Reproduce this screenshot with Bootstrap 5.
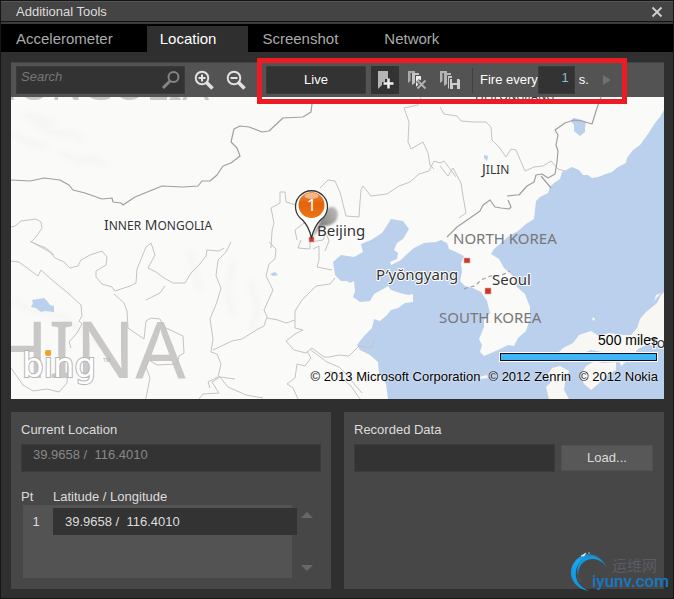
<!DOCTYPE html>
<html lang="en">
<head>
<meta charset="utf-8">
<meta name="viewport" content="width=device-width, initial-scale=1">
<title>Additional Tools</title>
<link href="https://cdn.jsdelivr.net/npm/bootstrap@5.3.0/dist/css/bootstrap.min.css" rel="stylesheet">
<style>
  body { background: #2f2f2f; color: #ddd; font: 13px/16px "Liberation Sans", Arial, sans-serif; }
  .tool-window { min-height: 100vh; border: 1px solid #151515; }
  .title-strip { height: 21px; background: #444; border-top: 1px solid #555; border-bottom: 1px solid #111; padding: 0 6px 0 15px; }
  .title-strip h1 { font-size: 13px; line-height: 18px; }
  .title-strip button, .bar-btn, .scroll-btn { background: none; border: 0; padding: 0; line-height: 0; }
  .tab-strip { background: #000; border-top: 2px solid #3c3c3c; height: 30px; padding-top: 2px; }
  .tab-strip .nav-link { color: #aaa; font-size: 15px; line-height: 18px; padding: 4px 32px 4px 14px; border: 0; border-radius: 0; }
  .tab-strip .nav-link.active { background: #2f2f2f; color: #fff; padding-left: 13px; }
  .tab-strip .nav-item:first-child .nav-link { padding-left: 15px; padding-right: 34px; }
  .tab-strip .nav-item:last-child .nav-link { padding-left: 32px; }
  .tab-strip .nav-item:nth-child(3) .nav-link { padding-right: 14px; }
  .main-area { padding: 10px 9px 9px 10px; }
  .tool-strip { height: 35px; background: #535353; border-top: 1px solid #444; padding: 0 5px; }
  .dark-field { background: #333; border: 1px solid #3b3b3b; border-radius: 0; color: #ddd; font-size: 13px; line-height: 16px; height: 28px; box-shadow: none; }
  .dark-field:focus { background: #333; color: #fff; border-color: #777; box-shadow: none; }
  .search-box { width: 169px; }
  .search-box input { padding: 0 34px 7px 4px; font-style: italic; }
  .search-box input::placeholder { color: #777; opacity: 1; }
  .search-box svg { right: 4px; top: 4px; }
  .zoom-group { gap: 12px; margin-left: 9px; }
  .fire-group { margin-left: 20px; gap: 5px; }
  .fire-group::after { content: ""; position: absolute; inset: -8px -11px -10px -9px; border: 5px solid #ed1c24; pointer-events: none; }
  .live-btn { width: 100px; padding: 0; color: #fff; }
  .bar-btn { width: 28px; height: 28px; }
  .bar-btn.on { background: #333; }
  .bar-btn.zoom-btn { width: 20px; }
  .bar-btn.start-btn { width: 18px; margin-left: -2px; }
  .bar-divider { width: 1px; height: 25px; background: #404040; margin: 0 2px 0 2px; }
  .seconds-box { width: 37px; padding: 0 5px 6px; color: #8dbdd0; text-align: right; }
  .map-area { min-height: 302px; background: #fafaf9; }
  .map-area > svg { position: absolute; inset: 0; width: 100%; height: 100%; }
  .map-foot { position: absolute; right: 6px; bottom: 14px; color: #000; text-shadow: 0 0 2px #fff; }
  .map-foot .scale-text { font-size: 14px; line-height: 16px; }
  .scale-line { width: 157px; height: 8px; background: #41b5f7; border: 1px solid #112; outline: 1px solid #fff; margin: 5px 1px 8px 0; }
  .credits { gap: 8px; }
  .panels { gap: 13px; margin-top: 13px; }
  .tool-panel { background: #474747; padding: 10px 10px 10px; min-height: 177px; flex: 1 1 0; }
  .tool-panel .head { line-height: 16px; margin-bottom: 6px; display: block; }
  .current-field { color: #888; padding: 0 11px 7px; }
  .points { margin-top: 17px; }
  .points table { margin-left: 2px; }
  .points th { font-weight: 400; line-height: 16px; padding: 0; }
  .points th:first-child { width: 30px; text-indent: -2px; }
  .points tbody td { background: #535353; padding: 3px 0 3px; }
  .points tbody tr:last-child td { height: 40px; }
  .points .point-cell { padding-right: 0; }
  .point-field { width: calc(100% + 5px); position: relative; padding: 0 11px; height: 27px; border-color: #333; }
  .scroll-col { width: 29px; padding: 22px 0 6px; }
  .load-field { height: 28px; }
  .load-btn { width: 92px; height: 26px; padding: 0; background: #585858; border: 1px solid #505050; border-radius: 0; color: #ddd; font-size: 13px; line-height: 16px; margin: 1px 1px 0 6px; }
  .site-mark { position: absolute; right: 3px; bottom: 3px; pointer-events: none; }
  .site-mark svg { display: block; }
  .map-area text { font-family: "Noto Sans", "Open Sans", sans-serif; }
  .map-area .wordmark { font-family: "DejaVu Sans", sans-serif; }
</style>
</head>
<body>
<div class="tool-window position-relative d-flex flex-column">
  <header class="title-strip d-flex justify-content-between align-items-center">
    <h1 class="m-0 fw-normal">Additional Tools</h1>
    <button type="button" aria-label="Close"><svg width="20" height="18" viewBox="0 0 20 18"><path d="M5.500 4.500l9 9M14.500 4.500l-9 9" stroke="#d0d0d0" stroke-width="1.800"/></svg></button>
  </header>
  <nav class="tab-strip" aria-label="Tools">
    <ul class="nav flex-nowrap">
      <li class="nav-item"><a class="nav-link" href="#accelerometer">Accelerometer</a></li>
      <li class="nav-item"><a class="nav-link active" aria-current="page" href="#location">Location</a></li>
      <li class="nav-item"><a class="nav-link" href="#screenshot">Screenshot</a></li>
      <li class="nav-item"><a class="nav-link" href="#network">Network</a></li>
    </ul>
  </nav>
  <main class="main-area d-flex flex-column flex-grow-1">
    <div class="tool-strip d-flex align-items-center position-relative z-1">
      <div class="search-box position-relative">
        <input class="form-control dark-field" type="text" placeholder="Search" aria-label="Search">
        <svg class="position-absolute" width="20" height="20" viewBox="0 0 20 20" fill="none" stroke="#858585"><circle cx="12.500" cy="7" r="5" stroke-width="2"/><path d="M9 11L2 18" stroke-width="3"/></svg>
      </div>
      <div class="zoom-group d-flex">
        <button class="bar-btn zoom-btn" type="button" aria-label="Zoom in"><svg width="20" height="22" viewBox="0 0 20 22" fill="none" stroke="#e2e2e2"><circle cx="8" cy="9" r="6.300" stroke-width="2"/><path d="M12.500 13.500l6 6" stroke-width="3.500"/><path d="M4.500 9h7M8 5.500v7" stroke-width="2"/></svg></button>
        <button class="bar-btn zoom-btn" type="button" aria-label="Zoom out"><svg width="20" height="22" viewBox="0 0 20 22" fill="none" stroke="#e2e2e2"><circle cx="8" cy="9" r="6.300" stroke-width="2"/><path d="M12.500 13.500l6 6" stroke-width="3.500"/><path d="M4.500 9h7" stroke-width="2"/></svg></button>
      </div>
      <div class="fire-group d-flex align-items-center position-relative">
        <button class="btn dark-field live-btn" type="button">Live</button>
        <button class="bar-btn on" type="button" aria-label="Add point"><svg width="28" height="28" viewBox="0 0 28 28"><path d="M7 5h10v8h-3v3h-3v3l-4 4z" fill="#b5b5b5"/><path d="M17.500 12.500v10M12.500 17.500h10" stroke="#eee" stroke-width="2.500"/></svg></button>
        <button class="bar-btn" type="button" aria-label="Clear points"><svg width="28" height="28" viewBox="0 0 28 28"><path d="M4 5h7v2H6.500v8L4 17z" fill="#aaa"/><path d="M8 7h7v2h-4v8l-3 2z" fill="#c4c4c4"/><path d="M12 10h5v4l-2 1v3l-3 3z" fill="#ececec"/><path d="M13.500 14.500l8 8M21.500 14.500l-8 8" stroke="#535353" stroke-width="4"/><path d="M13.500 14.500l8 8M21.500 14.500l-8 8" stroke="#b4b4b4" stroke-width="1.800"/></svg></button>
        <button class="bar-btn" type="button" aria-label="Save points"><svg width="28" height="28" viewBox="0 0 28 28"><path d="M3 5h7v2H5.500v8L3 17zM7 7h7v2h-4v9l-3 2z" fill="#b4b4b4"/><path d="M11 10h4v9l-4 4z" fill="#c8c8c8"/><path d="M12 12h11v11H12z" fill="#535353"/><path d="M13 13h2v4h5v-4h2l1 1v9h-3v-4h-4v4h-3z" fill="#cfcfcf"/></svg></button>
        <span class="bar-divider"></span>
        <div class="d-flex align-items-center text-white">
          <label for="interval" class="text-nowrap">Fire every</label>
          <input id="interval" class="form-control dark-field seconds-box" type="text" value="1">
          <span class="ps-1">s.</span>
        </div>
        <button class="bar-btn start-btn ms-1" type="button" aria-label="Start"><svg width="18" height="18" viewBox="0 0 18 18"><path d="M5 4l8 5-8 5z" fill="#707070"/></svg></button>
      </div>
    </div>

    <section class="map-area position-relative overflow-hidden flex-grow-1" aria-label="Map">
      <svg viewBox="11 97 653 302" preserveAspectRatio="xMidYMid slice">
        <defs>
          <linearGradient id="pinShade" x1="0" y1="1" x2="1" y2="0"><stop offset="0" stop-color="#333" stop-opacity=".85"/><stop offset="1" stop-color="#999" stop-opacity=".6"/></linearGradient>
          <linearGradient id="pinFill" x1="0" y1="0" x2="0" y2="1"><stop offset="0" stop-color="#ef8a3a"/><stop offset=".45" stop-color="#e2640c"/><stop offset="1" stop-color="#ee7415"/></linearGradient>
          <filter id="relief"><feGaussianBlur stdDeviation="3"/></filter>
          <filter id="soften"><feGaussianBlur stdDeviation=".8"/></filter>
        </defs>
        <path fill="#fafaf9" d="M11 97h653v302H11z"/>
        <g fill="none" stroke="#f2f2f1" stroke-width="4" filter="url(#relief)">
          <path d="M12 133l15 9 20 5M35 125l22 9 18 0 8 8M60 153l20 8 15-3 12 8M11 300l20 10 30 6 40 30M235 260l-8 30 6 25M250 280l8 30-6 20M190 250l10 40M25 115l30 8"/>
        </g>
        <!-- sea, from the Russian coast south round Korea, the Bohai gulf and Shandong -->
        <path fill="#bbd0ec" d="M664 110L660 117 655 123 648 134 640 145 633 150 627 158 626 163 618 167 612 172 606 174 598 177 592 178 588 175 583 175 579 170 572 167 566 170 562 172 560 179 554 183 550 187 548 193 540 197 536 201 535 210 534 219 526 224 518 231 509 236 501 243 494 249 491 254 499 259 504 268 512 275 517 287 525 294 530 307 530 319 526 331 518 338 514 346 508 345 498 350 484 356 480 352 482 345 479 339 484 327 484 320 490 313 487 301 481 292 473 288 465 286 460 281 462 272 461 263 464 256 456 252 449 249 447 243 441 240 436 242 424 243 414 248 407 254 401 260 391 265 390 262 397 259 398 253 394 250 397 243 403 239 409 229 403 221 391 219 386 227 382 233 371 240 361 244 363 252 354 257 341 255 333 262 335 275 341 281 347 281 350 283 354 281 355 291 353 297 360 302 370 301 374 294 383 289 388 286 391 290 400 293 408 295 413 294 413 302 405 303 398 308 391 310 387 315 380 321 374 319 372 328 364 336 357 345 360 350 370 355 378 362 379 373 386 384 388 399 664 399z"/>
        <path fill="#bbd0ec" d="M32 300l12-2 4 4 2 3 4 1 0 6-9-1-4 1-5-4-5-1 2-4zM573 118l6 1 7 3-1 5 0 5-5 4-6-5 0-6-3-4zM484 155l4 1-1 5-3-3zM270 274l5-2 3 3-5 1z"/>
        <path fill="#f8f7f3" d="M664 292l-3 3-4 8-11 9-6 7-3 9-6 7-8 0-14-2-10 3-8-5-12 4-6 8-10 5-9 9 12-4 13 2 12-5 16 3 10 2 4 11 10-8 7-9 8-4 18 1zM661 293l-7 8 2-6zM548 374l4-6 8-2 9 5-4 12-1 7 5 9h-20l-3-12 6-6-5-3zM580 376l6-10 9-5 7 2 14-1 0 8-10 6-9 9-6 5-7-6zM479 377l8-2 1 3-8 1zM593 317l2 2-1 2-2-2z"/>
        <g fill="none" stroke="#c4c4c4" stroke-width="1" stroke-linejoin="round">
          <path d="M11 227l4-1 6-5 15-2 5 3 1 6-6 9-5 5 15 6 8 7M30 241l20 11 5 6 9 4 6 6 8-2 3-6 9-5 12-4 5 6-1 8-10 6 0 6 6 7 10 3 3 4 15-5 6-3 1-14 9-22 5-4 4 12-7 13 8 4 8 6 9 5 12 0 6-10 8-8 7-9 1-6 12 1 5-3"/>
          <path d="M11 261l8 1 19 14 3-6 11 10 16 13 13 12 1 11-3 5 3 3-5 9-8 9 2 6M114 294l10 9 3 8 1 17 16 11 2-18 5-3 9 1 4 8 19 9 1 17-5 3-2 8-20 1-8-5-3 7 4 11-4 20-8 11M146 300l14-7 5-7"/>
          <path d="M231 242l-5 10-8 8-2 16 5 12-4 14-7 17 3 20-2 13 6 2 4 10-3 13-10 5 2 6M213 350l19-9 10-2 16-10 6-3 3-9-3-7 9-20-7-14 3-12 6-5 1-10-7-7"/>
          <path d="M267 318l11 2 8 3 9-3 0-9 7-11 14-14 14-2 5-6M295 320l0 8 8 2-8 4-9 7 8 9 12 3 6-5 12 9 5 0 10-2 10 1 10-10 12 2 3-7M307 351l4 7-6 8-8-2-2 14-8 6 6 4 5 11M311 350l8 6 8 6 12 5 8 8 8 10 7 8M219 376l9 11 18 8 17 3M11 368l12 17 10 6 14-2 12 3 8-9 1-20M199 399l4-5 16-1-7-11 8-5 15 2M360 399l-9-13-12-10-9-5"/>
          <path d="M271 248l1-17 2-8-3-15 9-5 0-11 5 0 1 10 10 3M320 188l8-8 7 1 5 11 6 24 13 1 1-15 1-12 2-4 8 10 16-2 12-8 11-4 9-8 10-3 5-10 6 2 4-2 12 16M421 97l-3 8-14 3 5 14-1 20 3 7 12-7 5 11 2 12 4 4"/>
          <path d="M440 107l4 7 13 2 4 5 13 1 12 0 5 5 1 13 7 7 7 10 5-8 5 1 9 21 9-4 9-1 8-5 7 8 7 2M440 166l8 10 5-8 8 15 2 13 3 17-7 5M297 240l-2-10 13-10M313 249l6-3 0 14-2 7 15 3M301 240l-3 8 12 1 0-7 13-2 3-7 3 8-4 10"/>
        </g>
        <g fill="none" stroke="#9f9f9f" stroke-width="1.200" stroke-linejoin="round">
          <path d="M11 180l19 1 14-3 16 2 9 5 4 5 12 3 17 6 10-1 1 4 8 1 2 2 12-8 27-11 21 1 15-1 4-5 8 0 7-6 6-9 8-3 9-7-3-8-6-6 3-13 6-3 9 1 13 5 7-1 14-13 20-1 8-5 1-8"/>
          <path d="M601 97l-4 11-5 16-10-3-8-1-9 3-10 7 3 5-2 10 2 6-1 11-2 12-7 4-6-4-6 1-2 7-7 4-8 9-3 0-9 1M508 200l3 7-2 2-8-1-6-1-5-7-7 5-3 6-10 7-13 9-10 10M541 176l10 12"/>
          <path stroke-dasharray="4 3" d="M464 289l5-2 6-1 6-6 9-4 12-1 8-4"/>
        </g>
        <g fill="#c5c2c2" opacity=".9">
          <text x="-60" y="378" font-size="79">CHINA</text>
          <text x="209" y="100" font-size="42" text-anchor="end">MONGOLIA</text>
        </g>
        <g fill="#333" stroke="#fff" stroke-width="2" paint-order="stroke" stroke-linejoin="round">
          <text x="475" y="100" font-size="12">H<tspan font-size="11">EILONGJIANG</tspan></text>
          <text x="104" y="230" font-size="14">I<tspan font-size="12">NNER</tspan> M<tspan font-size="12">ONGOLIA</tspan></text>
          <text x="482" y="174" font-size="14">J<tspan font-size="12">ILIN</tspan></text>
          <text x="317" y="236" font-size="15">Beijing</text>
          <text x="376" y="280" font-size="15">P′yŏngyang</text>
          <text x="492" y="285" font-size="15">Seoul</text>
          <text x="650" y="348" font-size="14">Tokyo</text>
        </g>
        <g fill="#777" font-size="15">
          <text x="453" y="244">NORTH KOREA</text>
          <text x="439" y="323">SOUTH KOREA</text>
        </g>
        <path fill="#c8382c" stroke="#e9aaa4" stroke-width=".6" d="M309 237h5v5h-5zM464 258h6v5h-6zM485 288h6v6h-6z"/>
        <path filter="url(#soften)" fill="url(#pinShade)" d="M312 238l8-16c1-9 7-16 13-15 6 2 6 10 2 15-4 4-11 4-15 5z"/>
        <path d="M311.500 238c-2-9-5-14-9-18a16 16 0 1 1 18 0c-4 4-7 9-9 18z" fill="#fff" stroke="#333" stroke-width="1.300"/>
        <circle cx="311.500" cy="205" r="13" fill="url(#pinFill)"/>
        <ellipse cx="311.500" cy="196" rx="7" ry="3" fill="#fff" opacity=".45"/>
        <text x="311.500" y="211" font-size="17" text-anchor="middle" fill="#fff">1</text>
        <text class="wordmark" x="22" y="377" font-size="34" fill="#fff" stroke="#b5b5b5" stroke-width="2" paint-order="stroke">bing</text>
        <text x="103" y="362" font-size="5" fill="#aaa">TM</text>
        <circle cx="48" cy="353" r="3" fill="#f6a21d"/>
      </svg>
      <div class="map-foot d-flex flex-column align-items-end">
        <span class="scale-text">500 miles</span>
        <div class="scale-line"></div>
        <div class="credits d-flex text-nowrap"><span>© 2013 Microsoft Corporation</span><span>© 2012 Zenrin</span><span>© 2012 Nokia</span></div>
      </div>
    </section>

    <div class="panels d-flex">
      <section class="tool-panel">
        <label class="head" for="current">Current Location</label>
        <input id="current" class="form-control dark-field current-field" type="text" value="39.9658 /  116.4010" readonly>
        <div class="points d-flex">
          <table class="flex-grow-1">
            <thead><tr><th scope="col">Pt</th><th scope="col">Latitude / Longitude</th></tr></thead>
            <tbody>
              <tr><td class="text-center pe-1">1</td><td class="point-cell"><input class="form-control dark-field point-field" type="text" value="39.9658 /  116.4010" aria-label="Point 1 latitude and longitude"></td></tr>
              <tr><td></td><td></td></tr>
            </tbody>
          </table>
          <div class="scroll-col d-flex flex-column justify-content-between align-items-center">
            <button class="scroll-btn" type="button" aria-label="Scroll up"><svg width="12" height="8" viewBox="0 0 12 8"><path d="M0 7l6-6 6 6z" fill="#686868"/></svg></button>
            <button class="scroll-btn" type="button" aria-label="Scroll down"><svg width="12" height="8" viewBox="0 0 12 8"><path d="M0 1l6 6 6-6z" fill="#686868"/></svg></button>
          </div>
        </div>
      </section>
      <section class="tool-panel">
        <label class="head" for="recorded">Recorded Data</label>
        <div class="d-flex">
          <input id="recorded" class="form-control dark-field load-field" type="text">
          <button class="btn load-btn flex-shrink-0" type="button">Load...</button>
        </div>
      </section>
    </div>
  </main>
  <div class="site-mark">
    <svg width="100" height="44" viewBox="0 0 100 44">
      <defs><linearGradient id="ring" x1="0" y1="1" x2="1" y2="0"><stop offset="0" stop-color="#0b8ee0"/><stop offset=".5" stop-color="#18a8f0"/><stop offset="1" stop-color="#246a9c"/></linearGradient></defs>
      <path d="M37 18C33 4 16-2 6 9C-4 20 1 37 19 40C6 35 3 24 8 14C14 3 30 2 37 18z" fill="url(#ring)"/>
      <path d="M34 13C25 4 12 8 9 18C7 25 9 29 11 31C5 22 7 12 13 8C20 3 29 5 34 13z" fill="#1698df"/>
      <path d="M11 5l5-3-2 3zM18 2h2" fill="#fff" stroke="#bfe8ff" stroke-width=".7"/>
      <text x="42" y="20" font-family="Noto Sans CJK SC, sans-serif" font-size="15" fill="#5a5c66">运维网</text>
      <text x="22" y="36" font-family="Roboto, sans-serif" font-size="17" font-weight="500" fill="#1578c4">iyunv.com</text>
    </svg>
  </div>
</div>
<script src="https://cdn.jsdelivr.net/npm/bootstrap@5.3.0/dist/js/bootstrap.bundle.min.js"></script>
</body>
</html>
